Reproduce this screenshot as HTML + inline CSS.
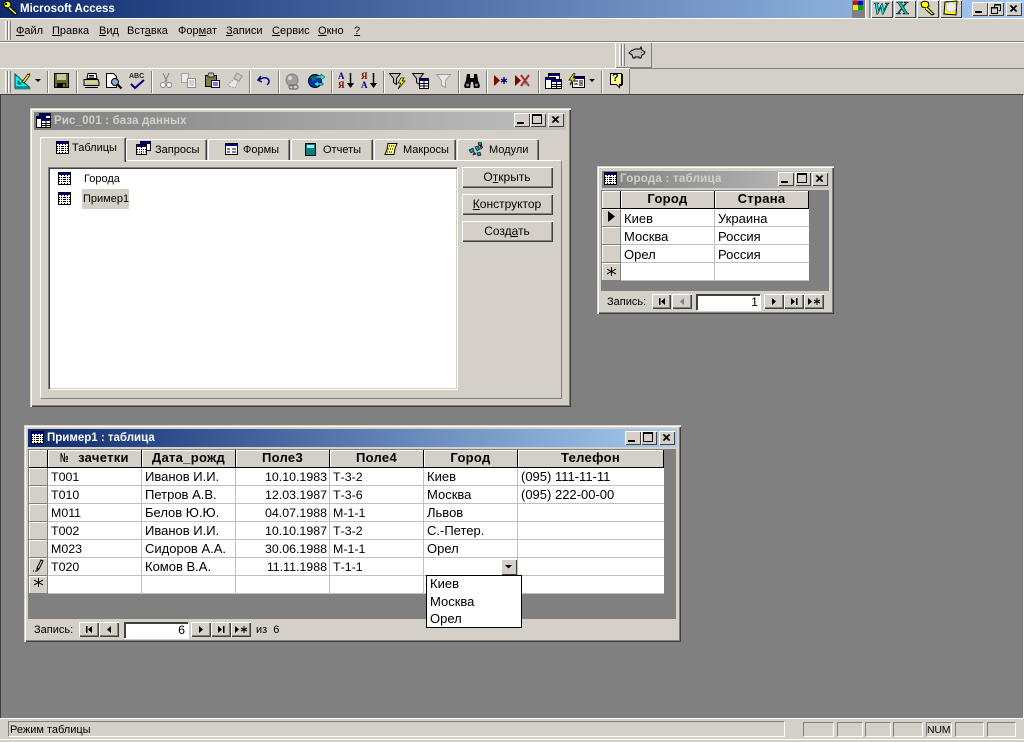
<!DOCTYPE html>
<html><head><meta charset="utf-8"><style>
html,body{margin:0;padding:0;width:1024px;height:742px;overflow:hidden;background:#d4d0c8}
body{position:relative;font:13px/14px "Liberation Sans",sans-serif;color:#000}
div,svg{position:absolute;box-sizing:border-box}
.t{white-space:nowrap;line-height:14px}
.d{font-size:12.4px}
.c{text-align:center}
.m{font-size:11px}
.b{font-weight:bold;letter-spacing:.3px}
u{text-decoration:underline}
.win{background:#d4d0c8;box-shadow:inset 1px 1px 0 #d4d0c8,inset 2px 2px 0 #fff,inset -1px -1px 0 #404040,inset -2px -2px 0 #808080}
.rz{background:#d4d0c8;box-shadow:inset 1px 1px 0 #fff,inset -1px -1px 0 #404040,inset -2px -2px 0 #808080}
.sm{background:#d4d0c8;box-shadow:inset 1px 1px 0 #fff,inset -1px -1px 0 #404040}
.hc{background:#d4d0c8;box-shadow:inset 1px 1px 0 #fff;border-right:1px solid #000;border-bottom:1px solid #000}
.sc{background:#d4d0c8;box-shadow:inset 1px 1px 0 #fff;border-right:1px solid #808080;border-bottom:1px solid #808080}
.hl{background:#c0c0c0;height:1px}
.vl{background:#c0c0c0;width:1px}
.sep{width:2px;height:22px;top:71px;border-left:1px solid #808080;border-right:1px solid #fff}
.gr{width:3px;background:#d4d0c8;border-left:1px solid #fff;border-right:1px solid #808080}
.tab{background:#d4d0c8;border-top:1px solid #fff;border-left:1px solid #fff;border-right:1px solid #404040;box-shadow:inset -1px 0 0 #808080;border-radius:2px 2px 0 0}
.st{border-top:1px solid #808080;border-left:1px solid #808080;border-right:1px solid #fff;border-bottom:1px solid #fff;top:722px;height:15px}
.wb{width:16px;height:14px}
.no{display:inline-block;width:14px;transform:scaleX(.58);transform-origin:left center;letter-spacing:0}
</style></head><body>
<svg width="0" height="0" style="left:0;top:0"><defs>
<g id="tbl"><rect x=".5" y=".5" width="12" height="12" fill="#fff" stroke="#000"/><rect x="1" y="1" width="11" height="2" fill="#000080"/><path d="M1 5.500h11M1 7.500h11M1 9.500h11M3.500 3v9M6.500 3v9M9.500 3v9" stroke="#000" stroke-width="1" stroke-dasharray="1 1" fill="none"/></g>
<g id="x"><path d="M4 3.500l6 6M5 3.500l6 6M10 3.500l-6 6M11 3.500l-6 6" stroke="#000" stroke-width="1"/></g>
<g id="min"><rect x="3" y="9" width="7" height="2" fill="#000"/></g>
<g id="max"><rect x="2.500" y="1.500" width="9" height="9" fill="none" stroke="#000"/><rect x="2" y="2" width="10" height="1" fill="#000"/></g>
<g id="star"><path d="M4.500 0v9M0 2l9 5M9 2L0 7" stroke="#000" stroke-width="1"/></g>
</defs></svg>

<!-- title bar -->
<div style="left:0;top:0;width:1024px;height:18px;background:linear-gradient(90deg,#0e2a6e 0%,#a6caf0 100%)"></div>
<svg style="left:1px;top:0" width="18" height="17"><path d="M2.500 3.500l3-2.500 3.500 1 1 3.500-3 2.500-3.500-1z" fill="#ff0" stroke="#000"/><path d="M8 7.500l7.500 7" stroke="#000" stroke-width="3.500"/><path d="M8 7.500l7 6.500" stroke="#ff0" stroke-width="1.500"/><rect x="4" y="3" width="2" height="2" fill="#000"/></svg>
<div class="t b" style="left:20px;top:2px;color:#fff;font-size:11.500px;letter-spacing:0">Microsoft Access</div>
<div style="left:852px;top:0;width:13px;height:18px;background:#808080"></div>
<div style="left:853px;top:1px;width:5px;height:4px;background:#e00000"></div><div style="left:858px;top:1px;width:5px;height:4px;background:#0000e0"></div>
<div style="left:853px;top:5px;width:5px;height:5px;background:#e8e800"></div><div style="left:858px;top:5px;width:5px;height:5px;background:#00a000"></div>
<div style="left:865px;top:0;width:5px;height:18px;background:#d4d0c8;border-left:1px solid #fff;border-right:1px solid #808080"></div>
<div class="sm" style="left:871px;top:0;width:22px;height:18px"></div>
<div class="t" style="left:873px;top:-1px;font:italic bold 17px/19px 'Liberation Serif',serif;color:#0ff;-webkit-text-stroke:.6px #000">W</div>
<div class="sm" style="left:894px;top:0;width:22px;height:18px"></div>
<div class="t" style="left:896px;top:-1px;font:bold 18px/19px 'Liberation Serif',serif;color:#0cc;-webkit-text-stroke:.6px #000">X</div>
<div class="sm" style="left:917px;top:0;width:22px;height:18px"></div>
<svg style="left:919px;top:0" width="18" height="17"><path d="M2 3l3-2 4 1 1 4-3 2-4-1z" fill="#ff0" stroke="#000"/><path d="M8 7l7 7-2 1-7-6" fill="#ff0" stroke="#000"/></svg>
<div class="sm" style="left:940px;top:0;width:22px;height:18px"></div>
<svg style="left:942px;top:0" width="18" height="17"><path d="M3 2l12-1-1 14-12-1z" fill="#ff0" stroke="#000"/><circle cx="9" cy="7" r="5" fill="#eee" stroke="#999" stroke-dasharray="1 1"/></svg>
<div class="sm wb" style="left:972px;top:2px"><svg width="16" height="14"><use href="#min"/></svg></div>
<div class="sm wb" style="left:988px;top:2px"><svg width="16" height="14"><path d="M6.500 2.500h6v6h-2M6.500 3v2M3.500 5.500h6v6h-6zM3 6h7M6 3h7" fill="none" stroke="#000"/></svg></div>
<div class="sm wb" style="left:1006px;top:2px"><svg width="16" height="14"><use href="#x"/></svg></div>

<!-- menu -->
<div style="left:0;top:18px;width:1024px;height:1px;background:#fff"></div>
<div style="left:0;top:41px;width:1024px;height:1px;background:#808080"></div>
<div style="left:0;top:42px;width:1024px;height:1px;background:#fff"></div>
<div class="gr" style="left:5px;top:21px;height:19px"></div><div class="gr" style="left:8px;top:21px;height:19px"></div>
<div class="t m" style="left:16px;top:24px"><u>Ф</u>айл</div>
<div class="t m" style="left:52px;top:24px"><u>П</u>равка</div>
<div class="t m" style="left:99px;top:24px"><u>В</u>ид</div>
<div class="t m" style="left:127px;top:24px">Вст<u>а</u>вка</div>
<div class="t m" style="left:178px;top:24px">Фор<u>м</u>ат</div>
<div class="t m" style="left:226px;top:24px"><u>З</u>аписи</div>
<div class="t m" style="left:272px;top:24px"><u>С</u>ервис</div>
<div class="t m" style="left:318px;top:24px"><u>О</u>кно</div>
<div class="t m" style="left:354px;top:24px"><u>?</u></div>

<!-- pig toolbar -->
<div class="rz" style="left:615px;top:42px;width:37px;height:26px;box-shadow:inset 1px 1px 0 #fff,inset -1px -1px 0 #808080"></div>
<div class="gr" style="left:619px;top:44px;height:22px"></div><div class="gr" style="left:622px;top:44px;height:22px"></div>
<svg style="left:628px;top:46px" width="18" height="16"><path d="M3 5l4-2h5l1-2 1 3 3 2-1 2-2 1-1 3h-2v-1H7v1H5l-1-3-3-2z" fill="#c0c0c0" stroke="#000"/><rect x="13" y="6" width="1" height="1" fill="#f00"/></svg>

<!-- standard toolbar -->
<div style="left:0;top:68px;width:630px;height:26px;box-shadow:inset 0 1px 0 #fff,inset -1px 0 0 #808080"></div>
<div style="left:0;top:68px;width:1024px;height:1px;background:#808080"></div>
<div style="left:0;top:68px;width:630px;height:1px;background:#fff"></div>
<div class="gr" style="left:5px;top:71px;height:22px"></div><div class="gr" style="left:8px;top:71px;height:22px"></div>
<svg style="left:14px;top:72px" width="18" height="18"><path d="M1 2v13h14zM4 9v3h3z" fill="#0ff" fill-rule="evenodd" stroke="#004040"/><path d="M1 15h15v2H1z" fill="#0aa" stroke="#004040" stroke-width=".5"/><path d="M8 10l6-8 2 1-6 8z" fill="#ff0" stroke="#000" stroke-width=".7"/><path d="M14 2l2 1 0-2z" fill="#c00"/></svg>
<svg style="left:35px;top:79px" width="7" height="4"><path d="M0 0h6l-3 3z" fill="#000"/></svg>
<div class="sep" style="left:47px"></div>
<svg style="left:54px;top:73px" width="16" height="16"><rect x=".5" y=".5" width="14" height="14" fill="#6b6b20" stroke="#000"/><rect x="3" y="1" width="9" height="6" fill="#c8c8a0"/><rect x="3" y="10" width="9" height="5" fill="#000"/><rect x="9" y="11" width="2" height="3" fill="#808000"/></svg>
<div class="sep" style="left:76px"></div>
<svg style="left:83px;top:73px" width="17" height="16"><path d="M5 .5h8l1 5H4z" fill="#fff" stroke="#000"/><path d="M1 6.500h14l1 3v3H1v-3z" fill="#c0c0c0" stroke="#000"/><path d="M2 9h12" stroke="#ff0"/><path d="M2 14.500h13" stroke="#000"/><path d="M6 2.500h5M6 4h5" stroke="#000"/></svg>
<svg style="left:106px;top:73px" width="17" height="17"><path d="M.5.500h7l3 3v11H.5z" fill="#fff" stroke="#000"/><circle cx="9" cy="9" r="3.500" fill="#8ac" stroke="#000"/><path d="M11.500 11.500l4 4" stroke="#000" stroke-width="2"/></svg>
<div class="t" style="left:129px;top:73px;font:bold 7px/8px 'Liberation Sans',sans-serif;color:#222">ABC</div>
<svg style="left:130px;top:79px" width="16" height="11"><path d="M1 5l4 4 9-8" fill="none" stroke="#000080" stroke-width="2"/></svg>
<div class="sep" style="left:151px"></div>
<svg style="left:160px;top:73px" width="12" height="17"><path d="M3 0l4 9M9 0L5 9" stroke="#808080" fill="none"/><circle cx="3" cy="12" r="2.500" fill="#fff" stroke="#808080"/><circle cx="9" cy="12" r="2.500" fill="#fff" stroke="#808080"/></svg>
<svg style="left:181px;top:73px" width="16" height="16"><path d="M.5.500h7v9h-7z" fill="#e8e8e8" stroke="#a0a0a0"/><path d="M6.500 5.500h8v9h-8z" fill="#fff" stroke="#909090"/><path d="M8 8h5M8 10h5M8 12h5" stroke="#a0a0a0"/></svg>
<svg style="left:204px;top:72px" width="17" height="17"><path d="M1.500 3.500h11v11h-11z" fill="#808040" stroke="#000"/><path d="M4 3l1-2h4l1 2v2H4z" fill="#c0c0c0" stroke="#000" stroke-width=".7"/><path d="M7.500 8.500h8v7h-8z" fill="#fff" stroke="#000080"/><path d="M9 11h5M9 13h5" stroke="#000080"/></svg>
<svg style="left:227px;top:72px" width="17" height="17"><path d="M10 1l5 3-3 5-5-3z" fill="#c8c8c8" stroke="#909090"/><path d="M8 7l3 3-3 6-6-2-1-2z" fill="#e8e8e8" stroke="#a0a0a0" stroke-dasharray="2 1"/></svg>
<div class="sep" style="left:249px"></div>
<svg style="left:257px;top:75px" width="14" height="12"><path d="M4 1L1 5l4 2" fill="none" stroke="#000080" stroke-width="1.500"/><path d="M1.500 5C5 3 9 2 11 4s1 4-1 6" fill="none" stroke="#000080" stroke-width="1.500"/></svg>
<div class="sep" style="left:278px"></div>
<svg style="left:285px;top:73px" width="17" height="17"><circle cx="7" cy="7" r="6" fill="#a0a0a0" stroke="#808080"/><path d="M8 12h3a2 2 0 010 4H8zM9 12H6a2 2 0 000 4h3" fill="none" stroke="#707070" stroke-width="1.200"/><circle cx="5" cy="5" r="2" fill="#d8d8d8"/></svg>
<svg style="left:308px;top:73px" width="17" height="17"><circle cx="7" cy="8" r="6.500" fill="#0030c0" stroke="#000"/><path d="M3 4l4-1 1 3-3 3zM8 9l3 1-1 4-2-1z" fill="#008040"/><path d="M8 3h5V1l4 3-4 3V5H8z" fill="#0ff" stroke="#000" stroke-width=".5"/><path d="M15 10h-5V8l-4 3 4 3v-2h5z" fill="#0ff" stroke="#000" stroke-width=".5"/></svg>
<div class="sep" style="left:331px"></div>
<div class="t" style="left:338px;top:72px;font:bold 9px/9px 'Liberation Serif',serif;color:#000080">А</div>
<div class="t" style="left:338px;top:81px;font:bold 9px/9px 'Liberation Serif',serif;color:#800000">Я</div>
<svg style="left:347px;top:73px" width="7" height="16"><path d="M3.500 0v11" stroke="#000" stroke-width="1.500"/><path d="M0 10h7l-3.500 5z" fill="#000"/></svg>
<div class="t" style="left:361px;top:72px;font:bold 9px/9px 'Liberation Serif',serif;color:#800000">Я</div>
<div class="t" style="left:361px;top:81px;font:bold 9px/9px 'Liberation Serif',serif;color:#000080">А</div>
<svg style="left:370px;top:73px" width="7" height="16"><path d="M3.500 0v11" stroke="#000" stroke-width="1.500"/><path d="M0 10h7l-3.500 5z" fill="#000"/></svg>
<div class="sep" style="left:383px"></div>
<svg style="left:389px;top:73px" width="17" height="17"><path d="M.5.500h11L7.500 5.500v6l-3-2v-4z" fill="#c0c0c0" stroke="#000"/><path d="M12 5L9 10h3l-3 6 7-8h-3l2-3z" fill="#ff0" stroke="#000" stroke-width=".7"/></svg>
<svg style="left:412px;top:73px" width="17" height="17"><path d="M.5.500h11L7.500 5.500v6l-3-2v-4z" fill="#c0c0c0" stroke="#000"/><rect x="7.500" y="5.500" width="9" height="10" fill="#fff" stroke="#000"/><rect x="8" y="6" width="8" height="2" fill="#000080"/><path d="M8 10.500h8M8 13h8M12 8v7" stroke="#000"/></svg>
<svg style="left:436px;top:74px" width="16" height="15"><path d="M.5.500h14L9.500 6.500v7l-4-2v-5z" fill="#e8e8e8" stroke="#a0a0a0"/></svg>
<div class="sep" style="left:458px"></div>
<svg style="left:464px;top:73px" width="16" height="16"><path d="M3 1h3v4h4V1h3l1 6 2 6-1 2h-5l-1-6H7l-1 6H1l-1-2 2-6z" fill="#000"/><circle cx="3.500" cy="12" r="1.500" fill="#88a"/><circle cx="12.500" cy="12" r="1.500" fill="#88a"/></svg>
<div class="sep" style="left:486px"></div>
<svg style="left:494px;top:75px" width="14" height="12"><path d="M0 0l6 5.500L0 11z" fill="#800000"/><path d="M10 2v7M7 4l6 3M13 4L7 7" stroke="#000080" stroke-width="1.300"/></svg>
<svg style="left:515px;top:74px" width="16" height="14"><path d="M0 1l6 5.500L0 12z" fill="#800000"/><path d="M6 1l8 11M14 1L6 12" stroke="#a03030" stroke-width="2"/><path d="M8 10h6" stroke="#808080"/></svg>
<div class="sep" style="left:538px"></div>
<svg style="left:545px;top:73px" width="17" height="17"><rect x="3.500" y=".5" width="11" height="8" fill="#fff" stroke="#000"/><rect x="4" y="1" width="10" height="2" fill="#000080"/><rect x=".5" y="4.500" width="10" height="11" fill="#fff" stroke="#000"/><rect x="1" y="5" width="9" height="2" fill="#000080"/><rect x="6.500" y="6.500" width="10" height="9" fill="#fff" stroke="#000"/><rect x="7" y="7" width="9" height="2" fill="#000080"/><path d="M7 11.500h9M7 13.500h9M11.500 9v6" stroke="#000"/></svg>
<svg style="left:568px;top:73px" width="17" height="17"><rect x="4.500" y="3.500" width="12" height="11" fill="#fff" stroke="#000"/><rect x="5" y="4" width="11" height="2" fill="#000080"/><path d="M6 8h4M6 11h4" stroke="#000"/><rect x="11.500" y="7.500" width="3" height="2" fill="#aaa" stroke="#000" stroke-width=".5"/><rect x="11.500" y="10.500" width="3" height="2" fill="#aaa" stroke="#000" stroke-width=".5"/><path d="M6 0L1 7h3L2 12l6-7H5l2-4z" fill="#ff0" stroke="#000" stroke-width=".7"/></svg>
<svg style="left:589px;top:79px" width="7" height="4"><path d="M0 0h6l-3 3z" fill="#000"/></svg>
<div class="sep" style="left:601px"></div>
<svg style="left:609px;top:72px" width="16" height="18"><path d="M1.500 1.500h11v11h-2v3l-3-3h-6z" fill="#ff8" stroke="#000"/><path d="M13.500 2v11M11 13.500h2" stroke="#000"/></svg>
<div class="t" style="left:612px;top:73px;font:bold 11px/11px 'Liberation Sans',sans-serif;color:#000080">?</div>

<!-- MDI -->
<div style="left:0;top:94px;width:1024px;height:624px;background:#808080;border-top:1px solid #404040;border-left:1px solid #404040;border-right:1px solid #fff"></div>

<!-- DB window -->
<div class="win" style="left:30px;top:108px;width:541px;height:299px"></div>
<div style="left:34px;top:112px;width:532px;height:18px;background:linear-gradient(90deg,#808080,#c0c0c0)"></div>
<svg style="left:36px;top:113px" width="16" height="16"><rect x="3.500" y=".5" width="11" height="9" fill="#fff" stroke="#000"/><rect x="4" y="1" width="10" height="2" fill="#000080"/><rect x=".5" y="3.500" width="9" height="11" fill="#fff" stroke="#000"/><rect x="1" y="4" width="8" height="2" fill="#000080"/><rect x="5.500" y="5.500" width="9" height="9" fill="#fff" stroke="#000"/><rect x="6" y="6" width="8" height="2" fill="#000080"/><path d="M6 10.500h8M6 12.500h8M10 8v6" stroke="#000"/></svg>
<div class="t b" style="left:54px;top:114px;color:#d4d0c8;font-size:11.500px;letter-spacing:.15px">Рис_001 : база данных</div>
<div class="sm wb" style="left:514px;top:113px"><svg width="16" height="14"><use href="#min"/></svg></div>
<div class="sm wb" style="left:530px;top:113px"><svg width="16" height="14"><use href="#max"/></svg></div>
<div class="sm wb" style="left:548px;top:113px"><svg width="16" height="14"><use href="#x"/></svg></div>

<div style="left:40px;top:160px;width:521px;height:238px;background:#d4d0c8;border-top:1px solid #fff;border-left:1px solid #fff;box-shadow:1px 1px 0 #808080"></div>
<div class="tab" style="left:126px;top:139px;width:81px;height:21px"></div>
<div class="tab" style="left:208px;top:139px;width:82px;height:21px"></div>
<div class="tab" style="left:291px;top:139px;width:82px;height:21px"></div>
<div class="tab" style="left:374px;top:139px;width:82px;height:21px"></div>
<div class="tab" style="left:457px;top:139px;width:82px;height:21px"></div>
<div class="tab" style="left:40px;top:137px;width:86px;height:25px;border-bottom:0"></div>

<svg style="left:56px;top:141px" width="14" height="14"><use href="#tbl"/></svg>
<div class="t m" style="left:72px;top:141px">Таблицы</div>
<svg style="left:136px;top:141px" width="16" height="16"><rect x="4.500" y=".5" width="10" height="9" fill="#fff" stroke="#000"/><rect x="5" y="1" width="9" height="2" fill="#000080"/><rect x=".5" y="3.500" width="10" height="10" fill="#fff" stroke="#000"/><rect x="1" y="4" width="9" height="2" fill="#000080"/><path d="M1 8.500h9M1 11h9M5.500 6v7" stroke="#000" stroke-dasharray="1 1"/></svg>
<div class="t m" style="left:155px;top:143px">Запросы</div>
<svg style="left:225px;top:143px" width="14" height="12"><rect x=".5" y=".5" width="12" height="11" fill="#fff" stroke="#000"/><rect x="1" y="1" width="11" height="2" fill="#000080"/><path d="M2 5h3v2H2zM2 8h3v2H2zM7 5h4v2H7zM7 8h4v2H7z" fill="#808080"/></svg>
<div class="t m" style="left:243px;top:143px">Формы</div>
<svg style="left:304px;top:143px" width="13" height="13"><rect x="1.500" y=".5" width="10" height="12" fill="#008080" stroke="#000"/><rect x="3" y="2" width="7" height="3" fill="#c0e0e0"/></svg>
<div class="t m" style="left:323px;top:143px">Отчеты</div>
<svg style="left:384px;top:142px" width="15" height="15"><path d="M4 1.500h9l-2 5-1 6H1l2-5z" fill="#ff8" stroke="#000"/><path d="M5 4h5M4 7h5M3 10h5" stroke="#000" stroke-dasharray="1 1"/></svg>
<div class="t m" style="left:403px;top:143px">Макросы</div>
<svg style="left:468px;top:142px" width="17" height="15"><path d="M1 8l4-2 1 3-3 2zM10 1l3-1 1 3-3 1zM7 5l3-1 2 3-3 2zM9 11l3-1 1 3-3 1z" fill="#00a0a0" stroke="#000" stroke-width=".6"/><path d="M12 3l3 2-2 2zM6 10l2 2-3 1z" fill="#d000d0" stroke="#000" stroke-width=".6"/></svg>
<div class="t m" style="left:489px;top:143px">Модули</div>

<!-- list -->
<div style="left:48px;top:167px;width:410px;height:223px;background:#fff;border-top:1px solid #808080;border-left:1px solid #808080;border-right:1px solid #fff;border-bottom:1px solid #fff;box-shadow:inset 1px 1px 0 #404040,inset -1px -1px 0 #d4d0c8"></div>
<svg style="left:58px;top:172px" width="14" height="14"><use href="#tbl"/></svg>
<div class="t m" style="left:84px;top:172px">Города</div>
<svg style="left:58px;top:192px" width="14" height="14"><use href="#tbl"/></svg>
<div style="left:82px;top:189px;width:47px;height:20px;background:#d4d0c8"></div>
<div class="t m" style="left:83px;top:192px">Пример1</div>

<div class="rz" style="left:462px;top:167px;width:91px;height:21px"></div>
<div class="t c" style="left:462px;top:170px;width:90px;font-size:12px">О<u>т</u>крыть</div>
<div class="rz" style="left:462px;top:194px;width:91px;height:21px"></div>
<div class="t c" style="left:462px;top:197px;width:90px;font-size:12px"><u>К</u>онструктор</div>
<div class="rz" style="left:462px;top:221px;width:91px;height:21px"></div>
<div class="t c" style="left:462px;top:224px;width:90px;font-size:12px">Созд<u>а</u>ть</div>

<!-- Города window -->
<div class="win" style="left:597px;top:166px;width:237px;height:148px"></div>
<div style="left:602px;top:171px;width:227px;height:17px;background:linear-gradient(90deg,#808080,#c0c0c0)"></div>
<svg style="left:604px;top:172px" width="14" height="14"><use href="#tbl"/></svg>
<div class="t b" style="left:620px;top:172px;color:#d4d0c8;font-size:11.500px;letter-spacing:.25px">Города : таблица</div>
<div class="sm wb" style="left:778px;top:172px"><svg width="16" height="14"><use href="#min"/></svg></div>
<div class="sm wb" style="left:795px;top:172px"><svg width="16" height="14"><use href="#max"/></svg></div>
<div class="sm wb" style="left:812px;top:172px"><svg width="16" height="14"><use href="#x"/></svg></div>
<div style="left:601px;top:190px;width:228px;height:101px;background:#808080"></div>
<div class="hc" style="left:602px;top:191px;width:19px;height:18px;border-right-color:#000"></div>
<div class="hc c b" style="left:621px;top:191px;width:94px;height:18px;padding-top:1px">Город</div>
<div class="hc c b" style="left:715px;top:191px;width:94px;height:18px;padding-top:1px">Страна</div>
<div style="left:621px;top:209px;width:188px;height:72px;background:#fff"></div>
<div class="hl" style="left:621px;top:226px;width:188px"></div>
<div class="hl" style="left:621px;top:244px;width:188px"></div>
<div class="hl" style="left:621px;top:262px;width:188px"></div>
<div class="hl" style="left:621px;top:280px;width:188px"></div>
<div class="vl" style="left:714px;top:209px;height:72px"></div>
<div class="sc" style="left:602px;top:209px;width:19px;height:18px"></div>
<div class="sc" style="left:602px;top:227px;width:19px;height:18px"></div>
<div class="sc" style="left:602px;top:245px;width:19px;height:18px"></div>
<div class="sc" style="left:602px;top:263px;width:19px;height:18px"></div>
<svg style="left:608px;top:211px" width="8" height="12"><path d="M0 0l7 5.500L0 11z" fill="#000"/></svg>
<svg style="left:607px;top:267px" width="9" height="9"><use href="#star"/></svg>
<div class="t" style="left:624px;top:212px">Киев</div><div class="t" style="left:718px;top:212px">Украина</div>
<div class="t" style="left:624px;top:230px">Москва</div><div class="t" style="left:718px;top:230px">Россия</div>
<div class="t" style="left:624px;top:248px">Орел</div><div class="t" style="left:718px;top:248px">Россия</div>
<div class="t m" style="left:607px;top:295px">Запись:</div>
<div class="rz" style="left:652px;top:294px;width:19px;height:15px"></div>
<svg style="left:652px;top:294px" width="19" height="15"><path d="M7 4h1.500v7H7zM13 4l-4 3.500 4 3.500z" fill="#000"/></svg>
<div class="rz" style="left:672px;top:294px;width:20px;height:15px"></div>
<svg style="left:672px;top:294px" width="20" height="15"><path d="M12 4L8 7.500l4 3.500z" fill="#808080"/></svg>
<div style="left:696px;top:294px;width:64px;height:16px;background:#fff;border-top:2px solid #404040;border-left:2px solid #404040;box-shadow:1px 1px 0 #fff"></div>
<div class="t d" style="left:700px;top:295px;width:58px;text-align:right">1</div>
<div class="rz" style="left:764px;top:294px;width:20px;height:15px"></div>
<svg style="left:764px;top:294px" width="20" height="15"><path d="M8 4l4 3.500L8 11z" fill="#000"/></svg>
<div class="rz" style="left:784px;top:294px;width:20px;height:15px"></div>
<svg style="left:784px;top:294px" width="20" height="15"><path d="M7 4l4 3.500L7 11zM12 4h1.500v7H12z" fill="#000"/></svg>
<div class="rz" style="left:804px;top:294px;width:20px;height:15px"></div>
<svg style="left:804px;top:294px" width="20" height="15"><path d="M4 4l4 3.500L4 11z" fill="#000"/><path d="M13 4v7M10 6l6 3M16 6l-6 3" stroke="#000"/></svg>

<!-- Пример1 window -->
<div class="win" style="left:24px;top:425px;width:657px;height:217px"></div>
<div style="left:28px;top:429px;width:649px;height:18px;background:linear-gradient(90deg,#0e2a6e,#a6caf0)"></div>
<svg style="left:31px;top:431px" width="14" height="14"><use href="#tbl"/></svg>
<div class="t b" style="left:47px;top:431px;color:#fff;font-size:11.500px;letter-spacing:0">Пример1 : таблица</div>
<div class="sm wb" style="left:625px;top:431px"><svg width="16" height="14"><use href="#min"/></svg></div>
<div class="sm wb" style="left:641px;top:431px"><svg width="16" height="14"><use href="#max"/></svg></div>
<div class="sm wb" style="left:659px;top:431px"><svg width="16" height="14"><use href="#x"/></svg></div>
<div style="left:28px;top:449px;width:648px;height:170px;background:#808080"></div>
<div class="hc" style="left:29px;top:450px;width:19px;height:18px"></div>
<div class="hc c b" style="left:48px;top:450px;width:94px;height:18px;padding-top:1px"><span class="no">№</span> зачетки</div>
<div class="hc c b" style="left:142px;top:450px;width:94px;height:18px;padding-top:1px">Дата_рожд</div>
<div class="hc c b" style="left:236px;top:450px;width:94px;height:18px;padding-top:1px">Поле3</div>
<div class="hc c b" style="left:330px;top:450px;width:94px;height:18px;padding-top:1px">Поле4</div>
<div class="hc c b" style="left:424px;top:450px;width:94px;height:18px;padding-top:1px">Город</div>
<div class="hc c b" style="left:518px;top:450px;width:146px;height:18px;padding-top:1px">Телефон</div>
<div style="left:48px;top:468px;width:616px;height:126px;background:#fff"></div>
<div class="hl" style="left:48px;top:485px;width:616px"></div>
<div class="hl" style="left:48px;top:503px;width:616px"></div>
<div class="hl" style="left:48px;top:521px;width:616px"></div>
<div class="hl" style="left:48px;top:539px;width:616px"></div>
<div class="hl" style="left:48px;top:557px;width:616px"></div>
<div class="hl" style="left:48px;top:575px;width:616px"></div>
<div class="hl" style="left:48px;top:593px;width:616px"></div>
<div class="vl" style="left:141px;top:468px;height:126px"></div>
<div class="vl" style="left:235px;top:468px;height:126px"></div>
<div class="vl" style="left:329px;top:468px;height:126px"></div>
<div class="vl" style="left:423px;top:468px;height:126px"></div>
<div class="vl" style="left:517px;top:468px;height:126px"></div>
<div class="sc" style="left:29px;top:468px;width:19px;height:18px"></div>
<div class="sc" style="left:29px;top:486px;width:19px;height:18px"></div>
<div class="sc" style="left:29px;top:504px;width:19px;height:18px"></div>
<div class="sc" style="left:29px;top:522px;width:19px;height:18px"></div>
<div class="sc" style="left:29px;top:540px;width:19px;height:18px"></div>
<div class="sc" style="left:29px;top:558px;width:19px;height:18px"></div>
<div class="sc" style="left:29px;top:576px;width:19px;height:18px"></div>
<svg style="left:32px;top:559px" width="13" height="14"><path d="M9 1l2 1-4 8-2-1zM5 9l0 3 2-2" fill="none" stroke="#000"/><path d="M1 12h1M3 12h1" stroke="#000"/></svg>
<svg style="left:34px;top:578px" width="9" height="9"><use href="#star"/></svg>

<div class="t d" style="left:51px;top:470px">Т001</div><div class="t" style="left:145px;top:470px">Иванов И.И.</div><div class="t d" style="left:240px;top:470px;width:87px;text-align:right">10.10.1983</div><div class="t d" style="left:333px;top:470px">Т-3-2</div><div class="t" style="left:427px;top:470px">Киев</div><div class="t" style="left:521px;top:470px">(095) 111-11-11</div>
<div class="t d" style="left:51px;top:488px">Т010</div><div class="t" style="left:145px;top:488px">Петров А.В.</div><div class="t d" style="left:240px;top:488px;width:87px;text-align:right">12.03.1987</div><div class="t d" style="left:333px;top:488px">Т-3-6</div><div class="t" style="left:427px;top:488px">Москва</div><div class="t" style="left:521px;top:488px">(095) 222-00-00</div>
<div class="t d" style="left:51px;top:506px">М011</div><div class="t" style="left:145px;top:506px">Белов Ю.Ю.</div><div class="t d" style="left:240px;top:506px;width:87px;text-align:right">04.07.1988</div><div class="t d" style="left:333px;top:506px">М-1-1</div><div class="t" style="left:427px;top:506px">Львов</div>
<div class="t d" style="left:51px;top:524px">Т002</div><div class="t" style="left:145px;top:524px">Иванов И.И.</div><div class="t d" style="left:240px;top:524px;width:87px;text-align:right">10.10.1987</div><div class="t d" style="left:333px;top:524px">Т-3-2</div><div class="t" style="left:427px;top:524px">С.-Петер.</div>
<div class="t d" style="left:51px;top:542px">М023</div><div class="t" style="left:145px;top:542px">Сидоров А.А.</div><div class="t d" style="left:240px;top:542px;width:87px;text-align:right">30.06.1988</div><div class="t d" style="left:333px;top:542px">М-1-1</div><div class="t" style="left:427px;top:542px">Орел</div>
<div class="t d" style="left:51px;top:560px">Т020</div><div class="t" style="left:145px;top:560px">Комов В.А.</div><div class="t d" style="left:240px;top:560px;width:87px;text-align:right">11.11.1988</div><div class="t d" style="left:333px;top:560px">Т-1-1</div>

<div class="sm" style="left:501px;top:559px;width:16px;height:16px"></div>
<svg style="left:505px;top:565px" width="7" height="4"><path d="M0 0h7l-3.500 3.500z" fill="#000"/></svg>
<div style="left:426px;top:575px;width:96px;height:53px;background:#fff;border:1px solid #000"></div>
<div class="t" style="left:430px;top:577px">Киев</div>
<div class="t" style="left:430px;top:595px">Москва</div>
<div class="t" style="left:430px;top:612px">Орел</div>

<div class="t m" style="left:34px;top:623px">Запись:</div>
<div class="rz" style="left:79px;top:622px;width:20px;height:15px"></div>
<svg style="left:79px;top:622px" width="20" height="15"><path d="M7 4h1.500v7H7zM13 4l-4 3.500 4 3.500z" fill="#000"/></svg>
<div class="rz" style="left:99px;top:622px;width:20px;height:15px"></div>
<svg style="left:99px;top:622px" width="20" height="15"><path d="M12 4L8 7.500l4 3.500z" fill="#000"/></svg>
<div style="left:124px;top:622px;width:64px;height:16px;background:#fff;border-top:2px solid #404040;border-left:2px solid #404040;box-shadow:1px 1px 0 #fff"></div>
<div class="t d" style="left:128px;top:623px;width:57px;text-align:right">6</div>
<div class="rz" style="left:191px;top:622px;width:20px;height:15px"></div>
<svg style="left:191px;top:622px" width="20" height="15"><path d="M8 4l4 3.500L8 11z" fill="#000"/></svg>
<div class="rz" style="left:211px;top:622px;width:20px;height:15px"></div>
<svg style="left:211px;top:622px" width="20" height="15"><path d="M7 4l4 3.500L7 11zM12 4h1.500v7H12z" fill="#000"/></svg>
<div class="rz" style="left:231px;top:622px;width:20px;height:15px"></div>
<svg style="left:231px;top:622px" width="20" height="15"><path d="M4 4l4 3.500L4 11z" fill="#000"/><path d="M13 4v7M10 6l6 3M16 6l-6 3" stroke="#000"/></svg>
<div class="t m" style="left:256px;top:623px;word-spacing:3px">из 6</div>

<!-- status bar -->
<div style="left:0;top:718px;width:1024px;height:1px;background:#fff"></div>
<div style="left:8px;top:721px;width:777px;height:16px;border-top:1px solid #808080;border-left:1px solid #808080;border-right:1px solid #fff;border-bottom:1px solid #fff"></div>
<div class="t m" style="left:10px;top:723px">Режим таблицы</div>
<div class="st" style="left:803px;width:31px"></div>
<div class="st" style="left:837px;width:26px"></div>
<div class="st" style="left:865px;width:26px"></div>
<div class="st" style="left:893px;width:30px"></div>
<div class="st" style="left:926px;width:26px"></div>
<div class="t m" style="left:927px;top:723px;font-size:10.500px;letter-spacing:-.2px">NUM</div>
<div class="st" style="left:955px;width:29px"></div>
<div class="st" style="left:987px;width:29px"></div>
<div style="left:0;top:739px;width:1024px;height:1px;background:#fff"></div>
</body></html>
